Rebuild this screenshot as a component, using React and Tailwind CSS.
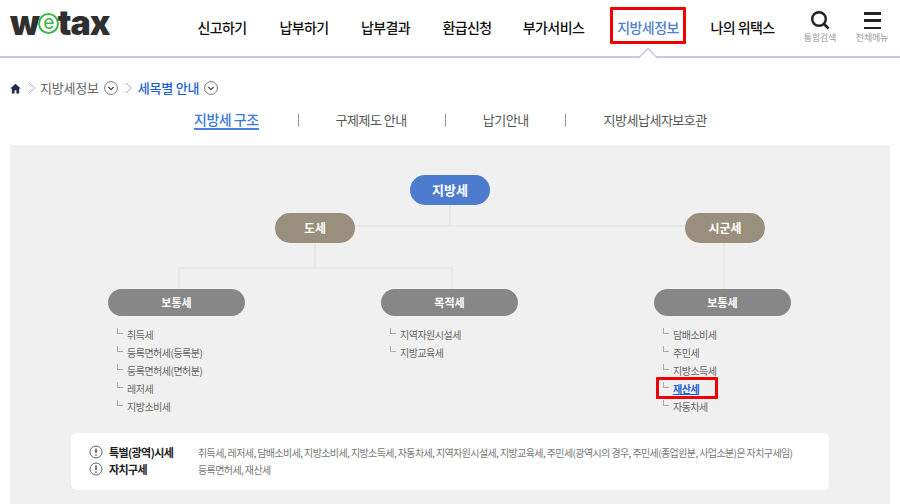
const KR = { fontFamily: '"Noto Sans CJK KR", "Noto Sans", sans-serif' };

const nav = [
  ['신고하기', 'w-[82px]'],
  ['납부하기', 'w-[82px]'],
  ['납부결과', 'w-[81px]'],
  ['환급신청', 'w-[82px]'],
  ['부가서비스', 'w-[91px]'],
];

function Chev({ className }) {
  return (
    <svg width="14" height="14" viewBox="0 0 14 14" fill="none" className={`shrink-0 ${className}`}>
      <circle cx="7" cy="7" r="6.4" stroke="#777" strokeWidth="1" />
      <path d="M4.4 6l2.6 2.6L9.6 6" stroke="#444" strokeWidth="1.2" />
    </svg>
  );
}

function Sep({ className }) {
  return (
    <svg width="8" height="12" viewBox="0 0 8 12" fill="none" className={`shrink-0 ${className}`}>
      <path d="M1 1l5.5 5L1 11" stroke="#aaa" strokeWidth="1" />
    </svg>
  );
}

function Info() {
  return (
    <svg width="14" height="14" viewBox="0 0 14 14" fill="none" className="shrink-0">
      <circle cx="7" cy="7" r="6" stroke="#5b6178" strokeWidth="1" />
      <path d="M7 3.5v4.5M7 9.4v1.4" stroke="#333" strokeWidth="1.3" />
    </svg>
  );
}

function Item({ children, active }) {
  return (
    <li className="relative flex h-[18px] items-center pl-[19px] text-[10px] tracking-[-0.5px] text-[#666]">
      <span className="absolute left-[9px] top-[3px] h-[6px] w-[6px] border-b border-l border-[#aaa]" />
      {active ? (
        <>
          <a className="font-bold text-[#1a5fd0] underline">{children}</a>
          <span className="absolute left-[2px] top-[-2px] h-[22px] w-[62px] rounded-[1px] border-[3px] border-[#f00000]" />
        </>
      ) : (
        children
      )}
    </li>
  );
}

function Col({ title, items, active }) {
  return (
    <div className="w-[137px]">
      <div className="flex h-[27px] items-center justify-center rounded-full bg-[#878787] text-[11px] font-bold text-white">
        {title}
      </div>
      <ul className="mt-[9px]">
        {items.map((t) => (
          <Item key={t} active={t === active}>{t}</Item>
        ))}
      </ul>
    </div>
  );
}

function Line({ className }) {
  return <span className={`absolute bg-[#e8e8e8] ${className}`} />;
}

export default function App() {
  return (
    <div className="h-[504px] w-[900px] overflow-hidden bg-white" style={KR}>
      <header className="relative flex h-[58px] items-start border-b-2 border-[#c5c9d9]">
        <div className="ml-[10px] mt-[6px] flex h-[34px] w-[171px] items-center text-[34px] font-black leading-none tracking-[-1px] text-[#2f2f2f]" style={{ fontFamily: 'Inter, sans-serif' }}>
          <span>w</span>
          <span className="mx-[-1px] flex h-[21px] w-[21px] items-center justify-center rounded-full border-2 border-[#3db54a] pb-[2px] text-[19px] font-normal text-[#3db54a]">e</span>
          <span>tax</span>
        </div>
        <nav className="mt-[18px] flex text-[14px] font-medium leading-[18px] tracking-[-0.6px] text-[#111]">
          {nav.map(([t, w]) => (
            <span key={t} className={`${w} text-center`}>{t}</span>
          ))}
          <span className="w-[98px] text-center text-[#4f7fd0]">지방세정보</span>
          <span className="w-[91px] text-center">나의 위택스</span>
        </nav>
        <span className="absolute left-[610px] top-[7px] h-[37px] w-[76px] rounded-[1px] border-[3px] border-[#f00000]" />
        <svg className="absolute left-[637px] top-[47px]" width="22" height="12" viewBox="0 0 22 12" fill="none">
          <path d="M0 11h2L11 2l9 9h2v1H0z" fill="#fff" />
          <path d="M0 10.500h2L11 1.500l9 9h2" stroke="#c5c9d9" strokeWidth="1.300" />
        </svg>
        <div className="ml-[6px] mt-[10px] flex w-[52px] flex-col items-center">
          <svg width="20" height="20" viewBox="0 0 20 20" fill="none">
            <circle cx="9" cy="9" r="6.800" stroke="#222" strokeWidth="2.400" />
            <path d="M14 14l4.500 4.500" stroke="#222" strokeWidth="2.600" />
          </svg>
          <span className="mt-[1px] text-[9px] leading-[14px] tracking-[-0.2px] text-[#999]">통합검색</span>
        </div>
        <div className="mt-[12px] flex w-[52px] flex-col items-center">
          <div className="flex h-[17px] w-[17px] flex-col justify-between">
            <span className="h-[2.500px] bg-[#222]" />
            <span className="h-[2.500px] bg-[#222]" />
            <span className="h-[2.500px] bg-[#222]" />
          </div>
          <span className="mt-[2px] text-[9px] leading-[14px] tracking-[-0.2px] text-[#999]">전체메뉴</span>
        </div>
      </header>

      <div className="mt-[20px] flex h-[20px] items-center pl-[10px] text-[13px] tracking-[-0.2px] text-[#666]">
        <svg width="11" height="11" viewBox="0 0 12 12" className="shrink-0">
          <path d="M6 .8L.3 6h1.700v5.400h3V8h2v3.400h3V6h1.700z" fill="#1f2d4d" />
        </svg>
        <Sep className="ml-[7px]" />
        <span className="ml-[4px]">지방세정보</span>
        <Chev className="ml-[5px]" />
        <Sep className="ml-[7px]" />
        <span className="ml-[5px] font-medium text-[#1f62d6]">세목별 안내</span>
        <Chev className="ml-[5px]" />
      </div>

      <div className="mb-[13px] mt-[10px] flex h-[24px] items-center text-[13px] tracking-[-0.5px] text-[#555]">
        <span className="ml-[194px] border-b-2 border-[#4a80dc] text-[14px] font-medium leading-[18px] text-[#3a78dc]">지방세 구조</span>
        <span className="ml-[39px] h-[13px] w-px bg-[#999]" />
        <span className="ml-[37px]">구제제도 안내</span>
        <span className="ml-[38px] h-[13px] w-px bg-[#999]" />
        <span className="ml-[37px]">납기안내</span>
        <span className="ml-[36px] h-[13px] w-px bg-[#999]" />
        <span className="ml-[38px]">지방세납세자보호관</span>
      </div>

      <section className="relative mx-[10px] h-[359px] bg-[#f0f0f0] pt-[30px]">
        <Line className="left-[439px] top-[60px] h-[21px] w-[2px]" />
        <Line className="left-[340px] top-[80px] h-[2px] w-[340px]" />
        <Line className="left-[304px] top-[98px] h-[25px] w-[2px]" />
        <Line className="left-[168px] top-[122px] h-[2px] w-[274px]" />
        <Line className="left-[168px] top-[122px] h-[22px] w-[2px]" />
        <Line className="left-[441px] top-[122px] h-[22px] w-[2px]" />
        <Line className="left-[713px] top-[98px] h-[46px] w-[2px]" />

        <div className="relative flex justify-center">
          <div className="flex h-[30px] w-[80px] items-center justify-center rounded-full bg-[#4d7ccf] text-[13px] font-bold text-white">지방세</div>
        </div>
        <div className="relative mt-[8px] flex justify-between pl-[265px] pr-[125px] text-[12px] font-bold text-white">
          <div className="flex h-[30px] w-[80px] items-center justify-center rounded-full bg-[#9a8e7c]">도세</div>
          <div className="flex h-[30px] w-[80px] items-center justify-center rounded-full bg-[#9a8e7c]">시군세</div>
        </div>
        <div className="relative mt-[46px] flex gap-[136px] pl-[98px]">
          <Col title="보통세" items={['취득세', '등록면허세(등록분)', '등록면허세(면허분)', '레저세', '지방소비세']} />
          <Col title="목적세" items={['지역자원시설세', '지방교육세']} />
          <Col title="보통세" items={['담배소비세', '주민세', '지방소득세', '재산세', '자동차세']} active="재산세" />
        </div>

        <div className="mx-[61px] mt-[18px] flex h-[57px] flex-col justify-center gap-[2px] rounded-[6px] bg-white pb-[2px] pl-[18px] text-[10px] tracking-[-0.6px] text-[#777]">
          <div className="flex h-[15px] items-center">
            <Info />
            <b className="ml-[6px] w-[89px] text-[11px] text-[#222]">특별(광역)시세</b>
            <span>취득세, 레저세, 담배소비세, 지방소비세, 지방소득세, 자동차세, 지역자원시설세, 지방교육세, 주민세(광역시의 경우, 주민세(종업원분, 사업소분)은 자치구세임)</span>
          </div>
          <div className="flex h-[15px] items-center">
            <Info />
            <b className="ml-[6px] w-[89px] text-[11px] text-[#222]">자치구세</b>
            <span>등록면허세, 재산세</span>
          </div>
        </div>
      </section>
    </div>
  );
}
